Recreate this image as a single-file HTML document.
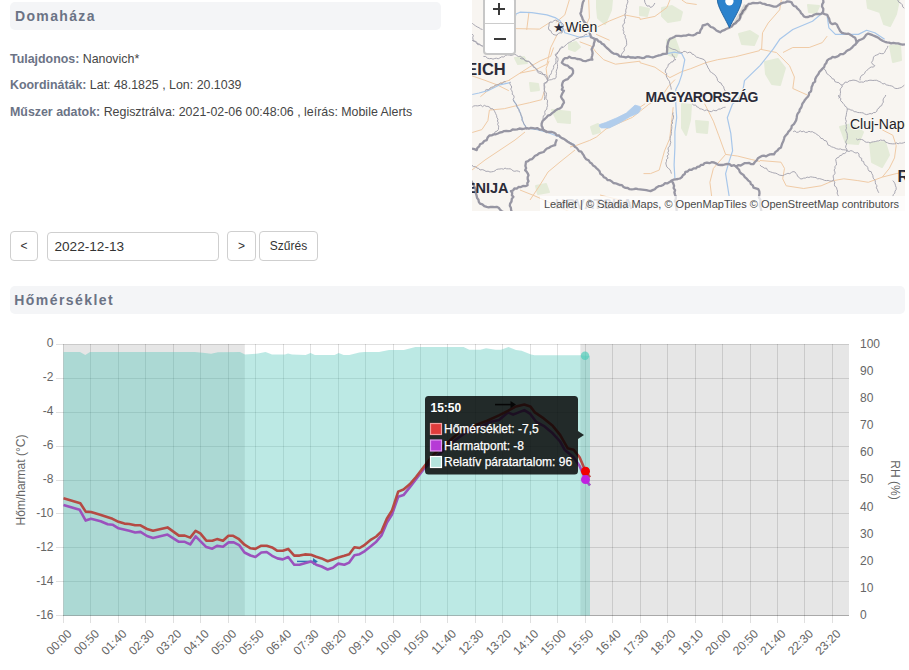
<!DOCTYPE html>
<html><head><meta charset="utf-8">
<style>
html,body{margin:0;padding:0;background:#fff;}
body{width:909px;height:670px;overflow:hidden;position:relative;font-family:"Liberation Sans",sans-serif;}
.a{position:absolute;}
.hdr{position:absolute;background:#f4f5f7;border-radius:5px;}
.hdr span{position:absolute;left:4.2px;font-size:14px;font-weight:bold;color:#6b7385;letter-spacing:1.5px;}
.info{position:absolute;left:10px;font-size:12.4px;color:#454545;white-space:nowrap;}
.info b{color:#6b7385;}
.btn{position:absolute;box-sizing:border-box;border:1px solid #cfcfcf;border-radius:4px;background:#fff;color:#333;font-size:12px;text-align:center;}
.map-ctl{position:absolute;left:482.5px;top:-3px;width:33.2px;height:57.6px;box-sizing:border-box;border:2px solid rgba(0,0,0,0.22);border-radius:4px;background:#fff;}
.attr{position:absolute;left:540px;top:196px;width:365px;height:15px;background:rgba(255,255,255,0.72);font-size:11px;color:#4a4a4a;white-space:nowrap;}
</style></head><body>
<div class="hdr" style="left:10px;top:2px;width:431px;height:28px;"><span style="top:6.3px;left:5px;letter-spacing:1.35px">Domaháza</span></div>
<div class="info" style="top:51.6px;"><b>Tulajdonos:</b> Nanovich*</div>
<div class="info" style="top:78.3px;"><b>Koordináták:</b> Lat: 48.1825 , Lon: 20.1039</div>
<div class="info" style="top:105px;"><b>Műszer adatok:</b> Regisztrálva: 2021-02-06 00:48:06 , leírás: Mobile Alerts</div>
<svg style="position:absolute;left:472px;top:0" width="433" height="211" viewBox="472 0 433 211">
<rect x="472" y="0" width="433" height="211" fill="#f8f5f1"/>
<polygon points="597.0,0.0 612.0,0.0 611.0,10.0 605.0,24.0 598.0,18.0 597.0,8.0" fill="#e4ebd8" stroke="#e4ebd8" stroke-width="2" stroke-linejoin="round"/>
<polygon points="569.0,44.0 576.0,42.0 580.0,47.0 575.0,51.0 569.0,49.0" fill="#e4ebd8" stroke="#e4ebd8" stroke-width="2" stroke-linejoin="round"/>
<polygon points="662.0,8.0 672.0,6.0 682.0,12.0 680.0,20.0 668.0,22.0 662.0,16.0" fill="#e4ebd8" stroke="#e4ebd8" stroke-width="2" stroke-linejoin="round"/>
<polygon points="640.0,7.0 649.0,9.0 647.0,16.0 640.0,15.0" fill="#e4ebd8" stroke="#e4ebd8" stroke-width="2" stroke-linejoin="round"/>
<polygon points="739.0,34.0 750.0,31.0 758.0,36.0 754.0,45.0 742.0,44.0" fill="#e4ebd8" stroke="#e4ebd8" stroke-width="2" stroke-linejoin="round"/>
<polygon points="667.0,40.0 675.0,39.0 679.0,50.0 676.0,57.0 669.0,55.0" fill="#e4ebd8" stroke="#e4ebd8" stroke-width="2" stroke-linejoin="round"/>
<polygon points="765.0,62.0 778.0,59.0 785.0,68.0 780.0,85.0 772.0,84.0 766.0,74.0" fill="#e4ebd8" stroke="#e4ebd8" stroke-width="2" stroke-linejoin="round"/>
<polygon points="867.0,0.0 899.0,0.0 896.0,14.0 890.0,26.0 884.0,24.0 880.0,12.0 868.0,8.0" fill="#e4ebd8" stroke="#e4ebd8" stroke-width="2" stroke-linejoin="round"/>
<polygon points="890.0,46.0 900.0,45.0 901.0,60.0 893.0,62.0" fill="#e4ebd8" stroke="#e4ebd8" stroke-width="2" stroke-linejoin="round"/>
<polygon points="808.0,5.0 819.0,6.0 816.0,13.0 809.0,12.0" fill="#e4ebd8" stroke="#e4ebd8" stroke-width="2" stroke-linejoin="round"/>
<polygon points="840.0,127.0 852.0,124.0 863.0,132.0 858.0,144.0 846.0,143.0" fill="#e4ebd8" stroke="#e4ebd8" stroke-width="2" stroke-linejoin="round"/>
<polygon points="870.0,143.0 885.0,142.0 889.0,155.0 882.0,167.0 872.0,162.0" fill="#e4ebd8" stroke="#e4ebd8" stroke-width="2" stroke-linejoin="round"/>
<polygon points="682.0,104.0 691.0,105.0 690.0,120.0 686.0,135.0 682.0,128.0" fill="#e4ebd8" stroke="#e4ebd8" stroke-width="2" stroke-linejoin="round"/>
<polygon points="696.0,121.0 708.0,122.0 707.0,133.0 697.0,132.0" fill="#e4ebd8" stroke="#e4ebd8" stroke-width="2" stroke-linejoin="round"/>
<polygon points="515.0,58.0 524.0,57.0 527.0,63.0 518.0,64.0" fill="#e4ebd8" stroke="#e4ebd8" stroke-width="2" stroke-linejoin="round"/>
<polygon points="530.0,83.0 538.0,84.0 539.0,90.0 531.0,91.0" fill="#e4ebd8" stroke="#e4ebd8" stroke-width="2" stroke-linejoin="round"/>
<polygon points="552.0,110.0 570.0,112.0 570.0,123.0 558.0,122.0" fill="#e4ebd8" stroke="#e4ebd8" stroke-width="2" stroke-linejoin="round"/>
<polygon points="536.0,186.0 546.0,184.0 549.0,192.0 538.0,194.0" fill="#e4ebd8" stroke="#e4ebd8" stroke-width="2" stroke-linejoin="round"/>
<polygon points="591.0,127.0 598.0,124.0 600.0,132.0 593.0,134.0" fill="#e4ebd8" stroke="#e4ebd8" stroke-width="2" stroke-linejoin="round"/>
<polyline points="514.8,28.6 539.4,29.1 549.9,22.4" fill="none" stroke="#f0cba6" stroke-width="1" stroke-linejoin="round"/>
<polyline points="529.0,11.9 526.7,29.9" fill="none" stroke="#f0cba6" stroke-width="1" stroke-linejoin="round"/>
<polyline points="569.3,0.0 564.8,14.9 555.8,22.4" fill="none" stroke="#f0cba6" stroke-width="1" stroke-linejoin="round"/>
<polyline points="557.3,34.3 550.6,47.8 546.9,64.2 534.9,70.1 520.0,73.1" fill="none" stroke="#f0cba6" stroke-width="1" stroke-linejoin="round"/>
<polyline points="588.7,0.0 589.4,17.9 584.2,29.9 564.8,29.9" fill="none" stroke="#f0cba6" stroke-width="1" stroke-linejoin="round"/>
<polyline points="597.6,26.9 609.6,20.9 624.5,14.9 640.0,17.9 640.0,19.4 654.9,16.4 666.9,7.5 669.9,0.0" fill="none" stroke="#f0cba6" stroke-width="1" stroke-linejoin="round"/>
<polyline points="579.7,41.8 591.6,46.3 596.1,52.2 603.6,59.7 615.5,64.2 640.0,61.2 640.0,62.7 654.9,67.2 669.9,77.6 681.8,71.6 690.7,68.7 705.7,62.7 717.6,59.7 735.5,56.7 759.4,50.7 760.0,49.2 776.4,52.5 789.5,65.6 794.4,77.0 792.8,88.5 807.5,95.1" fill="none" stroke="#f0cba6" stroke-width="1" stroke-linejoin="round"/>
<polyline points="596.1,34.3 609.6,40.3" fill="none" stroke="#f0cba6" stroke-width="1" stroke-linejoin="round"/>
<polyline points="681.8,0.0 686.3,3.0 696.7,4.5" fill="none" stroke="#f0cba6" stroke-width="1" stroke-linejoin="round"/>
<polyline points="781.3,0.0 779.7,9.8 768.2,23.0 762.5,32.8 761.6,49.2" fill="none" stroke="#f0cba6" stroke-width="1" stroke-linejoin="round"/>
<polyline points="783.0,52.5 792.8,47.5 809.2,47.5 822.3,42.6 827.2,36.1" fill="none" stroke="#f0cba6" stroke-width="1" stroke-linejoin="round"/>
<polyline points="760.0,160.5 781.0,162.2 784.5,168.4 782.7,178.8 786.2,185.8 803.7,188.5 821.1,185.8 833.4,180.6 843.8,178.8 857.8,180.6 868.3,182.3 882.3,177.1 896.2,173.6 905.0,171.9" fill="none" stroke="#f0cba6" stroke-width="1" stroke-linejoin="round"/>
<polyline points="882.3,177.1 889.3,168.4 894.5,157.9 896.2,145.7 892.8,135.2 882.3,129.9" fill="none" stroke="#f0cba6" stroke-width="1" stroke-linejoin="round"/>
<polyline points="704.6,103.7 713.4,121.2 718.6,135.2 725.6,154.4 737.8,156.1 751.8,159.6 760.0,161.4" fill="none" stroke="#f0cba6" stroke-width="1" stroke-linejoin="round"/>
<polyline points="725.6,154.4 713.4,168.4 709.9,182.3 711.6,196.0" fill="none" stroke="#f0cba6" stroke-width="1" stroke-linejoin="round"/>
<polyline points="673.2,107.2 669.7,138.7 664.5,150.9 659.2,170.1 650.5,173.6 643.5,173.6" fill="none" stroke="#f0cba6" stroke-width="1" stroke-linejoin="round"/>
<polyline points="640.0,107.2 645.2,103.7" fill="none" stroke="#f0cba6" stroke-width="1" stroke-linejoin="round"/>
<polyline points="471.8,75.8 484.9,80.3 496.9,84.8 508.8,90.7" fill="none" stroke="#f0cba6" stroke-width="1" stroke-linejoin="round"/>
<polyline points="508.8,80.3 529.7,66.9 540.1,60.9 550.6,56.4 553.6,47.5" fill="none" stroke="#f0cba6" stroke-width="1" stroke-linejoin="round"/>
<polyline points="480.4,96.7 489.4,89.3 499.9,83.3 510.0,80.0" fill="none" stroke="#f0cba6" stroke-width="1" stroke-linejoin="round"/>
<polyline points="547.6,80.3 546.1,68.4 549.1,60.9" fill="none" stroke="#f0cba6" stroke-width="1" stroke-linejoin="round"/>
<polyline points="489.4,110.1 487.9,120.6 481.9,129.6 472.2,132.5" fill="none" stroke="#f0cba6" stroke-width="1" stroke-linejoin="round"/>
<polyline points="489.4,110.1 504.3,108.7 516.3,105.7 529.7,102.7 541.6,99.7 544.6,90.7" fill="none" stroke="#f0cba6" stroke-width="1" stroke-linejoin="round"/>
<polyline points="570.0,147.0 576.6,145.3 589.7,140.4 596.3,137.1 606.1,128.9 620.9,122.3 632.4,117.4 640.6,110.8 648.8,104.3 662.0,96.0 668.5,86.2 675.0,79.6" fill="none" stroke="#f0cba6" stroke-width="1" stroke-linejoin="round"/>
<polyline points="472.0,170.0 485.0,160.0 500.0,150.0 515.0,140.0 525.0,132.0" fill="none" stroke="#f0cba6" stroke-width="1" stroke-linejoin="round"/>
<polyline points="530.0,200.0 540.0,185.0 548.0,172.0 560.0,162.0 575.0,150.0" fill="none" stroke="#f0cba6" stroke-width="1" stroke-linejoin="round"/>
<polyline points="520.0,190.0 535.0,196.0 555.0,205.0 570.0,212.0" fill="none" stroke="#f0cba6" stroke-width="1" stroke-linejoin="round"/>
<polyline points="600.0,195.0 620.0,200.0 640.0,205.0" fill="none" stroke="#f0cba6" stroke-width="1" stroke-linejoin="round"/>
<polyline points="514.8,18.5 516.0,14.0 520.0,12.2 531.9,12.7 546.9,14.9 555.8,17.9 560.3,20.9 564.8,32.8 579.7,37.3 590.1,35.8 597.6,40.3 606.6,47.8 614.0,53.7 621.5,56.7 640.0,57.5 654.9,56.7 666.9,53.7 674.3,52.2 681.8,53.7 684.8,59.7 681.8,74.6 678.8,83.6 675.8,89.6 675.8,103.7 676.7,117.7 674.9,131.7 674.9,147.4 674.1,164.9 674.9,178.8" fill="none" stroke="#a8c7ea" stroke-width="1.2" stroke-linejoin="round"/>
<polyline points="760.0,65.6 744.5,80.6 743.0,89.6" fill="none" stroke="#a8c7ea" stroke-width="1.2" stroke-linejoin="round"/>
<polyline points="822.3,13.1 812.5,21.3 792.8,29.5 779.7,39.3 773.1,49.2 760.0,65.6" fill="none" stroke="#a8c7ea" stroke-width="1.2" stroke-linejoin="round"/>
<polyline points="827.2,16.4 828.9,27.9 835.4,34.4 858.4,34.4 866.6,30.3 874.8,32.8 884.6,39.3" fill="none" stroke="#a8c7ea" stroke-width="1.2" stroke-linejoin="round"/>
<polyline points="732.6,103.7 727.3,117.7 730.8,133.4 732.6,150.9 729.1,161.4 725.6,173.6 729.1,196.0" fill="none" stroke="#a8c7ea" stroke-width="1.2" stroke-linejoin="round"/>
<polyline points="743.0,89.6 738.0,100.0 732.6,103.7" fill="none" stroke="#a8c7ea" stroke-width="1.2" stroke-linejoin="round"/>
<polyline points="472.2,94.5 479.0,93.0 487.9,90.7 499.9,84.8 510.3,82.5" fill="none" stroke="#a8c7ea" stroke-width="1.2" stroke-linejoin="round"/>
<polyline points="513.3,99.7 519.3,110.1 523.7,123.6 526.7,128.1 537.2,129.6 547.6,132.5 559.6,137.0 575.0,145.0" fill="none" stroke="#a8c7ea" stroke-width="1.2" stroke-linejoin="round"/>
<polygon points="599.4,124.6 605.5,122.6 616.9,117.8 626.3,113.1 635,105.1 639.7,106.4 641.1,108.4 638.4,113.1 630.3,116.5 620.2,122.6 609.5,127.9 601.4,127.9 599.4,126.6" fill="#b1cdec" stroke="#b1cdec" stroke-width="0.8" stroke-linejoin="round"/>
<polyline points="627.5,0.0 627.9,1.9 627.2,3.8 626.4,5.6 626.7,7.5 626.0,9.1 625.7,10.8 625.9,12.6 624.9,14.2 625.1,16.0 625.6,17.8 624.5,19.4 624.3,21.2 624.8,23.0 623.0,24.5 622.7,26.3 623.5,28.2 623.0,29.9 623.9,31.7 623.6,33.7 625.2,35.3 625.2,37.3 626.1,39.1 626.5,40.9 626.6,42.9 626.7,44.8 625.6,46.5 624.1,48.1 624.4,50.6 623.0,52.2 621.5,54.2 621.5,56.7" fill="none" stroke="#a4a3af" stroke-width="0.95" stroke-linejoin="round"/>
<polyline points="520.0,58.2 521.8,58.9 523.8,58.9 525.1,60.8 527.0,61.3 529.0,61.2 530.1,62.7 531.0,64.4 532.7,65.4 533.4,67.2 535.2,67.9 536.6,69.1 537.7,70.8 539.4,71.6 541.6,72.1 543.0,74.4 545.4,74.6 546.9,76.3 547.4,78.4 547.6,80.6 546.9,82.6 544.8,83.3 543.9,85.1 544.2,87.0 544.1,88.8 544.5,90.7 544.0,92.6 544.5,94.4 544.9,96.3 544.6,98.1 544.6,100.0" fill="none" stroke="#a4a3af" stroke-width="0.95" stroke-linejoin="round"/>
<polyline points="547.6,80.6 547.8,78.7 549.3,77.4 549.3,75.5 550.9,74.3 551.5,72.5 551.9,70.7 553.0,69.3 553.7,67.6 553.6,65.6 555.1,64.3 555.8,62.7 556.0,60.8 555.8,59.0 556.5,57.1 555.8,55.2 557.3,54.0 558.0,52.1 559.0,50.5 560.1,48.9 561.8,47.8 563.6,47.1 565.0,45.8 566.4,44.6 567.8,43.3 569.5,42.3 571.2,41.6 572.7,40.3 574.6,39.9 576.0,38.4 578.1,38.4 579.7,37.3 581.7,36.8 583.6,36.1 585.2,34.6 587.2,34.3" fill="none" stroke="#a4a3af" stroke-width="0.95" stroke-linejoin="round"/>
<polyline points="550.0,22.0 552.3,22.2 554.0,20.6 556.0,20.0 557.6,21.3 559.3,22.4 561.5,22.6 563.0,24.0 563.6,25.9 562.4,27.6 563.1,29.5 562.4,31.2 562.0,33.0 560.1,32.8 558.3,33.4 556.9,35.2 555.0,35.0 553.0,34.3 551.7,32.9 550.9,30.8 549.0,30.0 548.4,27.9 549.0,25.9 549.0,23.9 550.0,22.0" fill="none" stroke="#a4a3af" stroke-width="0.95" stroke-linejoin="round"/>
<polyline points="666.9,44.8 667.9,46.6 669.4,47.6 671.1,48.5 672.8,49.3 674.9,49.6 676.7,50.5 678.3,51.8 680.3,52.2 682.1,52.8 683.9,51.3 685.7,51.6 687.5,52.9 689.3,52.2 691.1,52.5 692.1,54.2 693.9,54.5 695.1,55.9 696.4,57.1 698.1,57.5 699.7,58.2 702.0,58.8 704.2,59.7 705.5,61.6 706.0,63.8 707.2,65.7 708.0,67.8 709.3,69.6 710.1,71.6 711.6,72.5 713.1,73.7 714.6,74.6 716.0,76.4 717.1,78.3 717.6,80.6 719.0,82.2 721.1,83.1 722.0,85.2 723.6,86.6 724.1,88.8 725.1,90.8 726.6,92.5" fill="none" stroke="#a4a3af" stroke-width="0.95" stroke-linejoin="round"/>
<polyline points="672.1,53.7 672.4,55.6 674.2,56.6 674.4,58.5 675.8,59.7 673.9,59.9 673.0,61.8 671.1,62.0 670.0,63.6 668.4,64.2 667.9,66.4 666.6,68.3 665.4,70.1 665.3,72.1 666.8,73.7 666.2,75.8 666.9,77.6 668.1,79.5 669.4,81.3 669.9,83.6 670.5,85.6 671.0,87.6 671.3,89.6" fill="none" stroke="#a4a3af" stroke-width="0.95" stroke-linejoin="round"/>
<polyline points="644.5,0.0 644.9,2.4 646.0,4.5 647.1,6.1 649.4,5.8 650.4,7.5 652.5,6.6 653.8,4.9 654.9,3.0" fill="none" stroke="#a4a3af" stroke-width="0.95" stroke-linejoin="round"/>
<polyline points="823.9,68.9 825.4,70.0 826.1,71.8 826.8,73.6 828.4,74.7 829.8,75.9 831.2,77.1 832.1,78.7 834.1,79.2 834.9,81.6 836.8,82.3 838.9,82.7 840.3,84.3 842.0,85.2 843.9,83.9 845.2,82.0 847.3,82.4 849.1,80.9 851.1,80.6 853.0,80.1 855.1,80.3 857.2,81.0 859.2,82.2 861.6,82.0 863.5,82.2 865.3,80.9 867.2,81.0 869.0,80.3 871.0,80.2 872.9,80.5 874.8,80.3 876.7,80.3 878.2,81.1 879.9,81.7 881.4,82.6 882.8,84.0 884.8,83.5 886.2,84.8 887.9,85.2 889.6,85.6 891.3,85.9 892.9,86.5 894.3,87.9 895.9,88.5 897.7,88.5 899.5,88.0 901.3,87.5 902.8,86.4 904.3,85.2" fill="none" stroke="#a4a3af" stroke-width="0.95" stroke-linejoin="round"/>
<polyline points="842.0,85.2 842.2,87.0 840.6,88.4 840.1,90.0 840.6,91.9 840.3,93.5 840.1,95.2 839.8,96.9 838.7,98.4" fill="none" stroke="#a4a3af" stroke-width="0.95" stroke-linejoin="round"/>
<polyline points="887.9,45.9 887.4,47.7 886.3,49.2 885.3,50.8 884.6,52.5 883.2,53.7 881.3,53.6 879.4,53.3 878.0,54.5 876.4,55.1 874.8,55.7 873.5,57.1 873.2,59.0 872.7,60.8 871.5,62.3 872.7,64.4 874.8,65.6 873.5,67.1 871.2,67.0 869.5,67.9 868.2,69.4 866.6,70.5 865.3,71.7 864.6,73.5 863.3,74.6 861.6,75.4 860.6,76.9 860.1,78.5 860.0,80.3" fill="none" stroke="#a4a3af" stroke-width="0.95" stroke-linejoin="round"/>
<polyline points="897.7,0.0 898.8,2.2 901.0,3.3 902.3,4.8 902.7,6.9 904.3,8.2" fill="none" stroke="#a4a3af" stroke-width="0.95" stroke-linejoin="round"/>
<polyline points="838.6,95.0 838.9,97.0 840.8,98.3 840.5,100.6 842.1,102.0 843.1,103.4 844.3,104.7 845.1,106.3 846.7,107.2 847.3,109.0 849.2,109.1 850.8,110.0 852.7,110.3 854.2,111.6 856.1,111.8 857.8,112.5 859.6,112.6 861.4,112.7 863.1,112.9 864.7,114.0 866.4,114.6 868.3,114.2 870.0,113.5 871.9,113.9 873.5,112.6 875.3,112.5 876.8,111.3 877.3,109.3 878.9,108.2 879.8,106.5 881.7,105.6 882.3,103.7 883.4,102.1 883.0,100.0 883.7,98.2 885.0,96.7 885.8,95.0" fill="none" stroke="#a4a3af" stroke-width="0.95" stroke-linejoin="round"/>
<polyline points="847.3,109.0 847.1,110.8 846.6,112.5 846.4,114.2 846.1,116.0 845.5,117.7 845.6,119.4 846.4,121.3 845.6,123.0 846.3,124.7 846.2,126.5 846.5,128.2 845.7,130.1 846.4,131.8 847.1,133.4 847.3,135.2 847.3,137.0 847.3,138.8 846.4,140.4 845.6,142.1 846.7,144.0 845.9,145.7 845.6,147.4 846.7,149.0 847.3,150.9" fill="none" stroke="#a4a3af" stroke-width="0.95" stroke-linejoin="round"/>
<polyline points="793.2,131.7 794.9,130.9 796.7,132.4 798.4,132.1 800.2,130.8 801.9,131.8 803.7,131.2 805.4,132.4 807.2,132.3 808.9,131.3 810.7,131.9 812.4,131.7 813.9,132.7 815.6,133.4 817.0,134.6 818.5,135.5 819.9,136.7 820.9,138.4 822.9,138.7 824.0,140.4 826.3,140.9 827.3,142.7 827.9,144.9 829.9,145.7 831.5,146.8 833.3,147.3 835.0,148.0 836.7,148.8 838.6,149.2 840.5,148.9 842.1,149.7 843.9,149.8 845.7,150.0 847.3,150.9 849.0,151.5 850.9,150.6 852.6,151.2 854.2,152.4 855.9,153.0 857.8,152.6 859.0,154.0 859.0,156.0 859.9,157.5 861.8,158.4 861.5,160.7 863.6,161.5 864.0,163.3 864.8,164.9 866.6,165.9 867.7,167.3 868.1,169.4 869.0,171.1 871.2,171.7 871.8,173.6 872.8,175.2 873.0,177.2 873.7,178.9 875.2,180.3 875.3,182.3 875.6,184.2 877.1,185.6 876.3,187.8 877.3,189.4 877.9,191.1 878.8,192.8" fill="none" stroke="#a4a3af" stroke-width="0.95" stroke-linejoin="round"/>
<polyline points="847.3,150.9 846.1,152.3 844.7,153.5 842.7,153.7 841.6,155.3 839.7,155.7 838.7,157.4 836.9,157.9 835.7,159.5 836.0,161.3 836.4,163.2 836.5,165.0 834.8,166.5 835.1,168.4 834.1,170.0 834.9,171.9 835.1,173.7 833.3,175.3 833.2,177.0 833.7,178.9 833.4,180.6 834.8,182.1 834.4,184.2 834.7,186.1 836.5,187.4 836.9,189.3 837.6,191.0 837.1,193.0 837.7,194.7 838.6,196.3" fill="none" stroke="#a4a3af" stroke-width="0.95" stroke-linejoin="round"/>
<polyline points="856.1,138.7 857.6,139.9 859.7,139.2 861.5,139.5 863.3,140.0 864.7,141.6 866.4,142.3 868.3,142.2 870.2,142.9 871.8,142.1 873.6,141.8 875.3,141.6 877.0,141.0 878.8,140.9 880.5,140.0 882.3,140.4 884.3,140.2 885.6,142.2 887.4,142.7 889.0,143.5 890.9,143.7 892.8,143.9 894.6,143.8 896.2,142.8 898.1,143.8 899.8,143.0 901.6,143.3 903.3,142.9 905.0,142.2" fill="none" stroke="#a4a3af" stroke-width="0.95" stroke-linejoin="round"/>
<polyline points="760.0,164.9 761.2,166.4 762.9,167.0 764.3,168.2 766.5,168.2 767.4,170.1 768.8,171.3 770.5,171.9 772.3,172.5 774.0,173.0 775.9,173.2 777.6,174.1 779.2,175.0 781.0,175.4 782.9,175.6 784.5,174.7 786.2,174.0 787.9,173.3 789.8,173.7 791.3,172.5 793.0,171.6 794.9,171.9 795.9,173.3 797.0,174.7 797.6,176.4 799.2,177.4 800.2,178.8 802.0,178.9 803.7,178.1 805.4,178.1 807.1,177.1 808.9,177.5 810.6,176.8 812.4,177.1 814.2,177.4 816.0,177.6 817.6,178.8 819.5,178.6 821.2,179.1 822.9,179.6 824.6,180.4 826.4,180.6 828.1,180.4 829.9,181.1 831.6,181.0 833.4,180.6" fill="none" stroke="#a4a3af" stroke-width="0.95" stroke-linejoin="round"/>
<polyline points="892.8,180.6 894.1,182.1 895.0,183.8 895.5,185.8 896.2,187.6 896.1,189.6 895.0,191.1 894.8,193.1 893.4,194.5 892.8,196.3" fill="none" stroke="#a4a3af" stroke-width="0.95" stroke-linejoin="round"/>
<polyline points="673.2,112.5 672.7,114.2 673.5,116.0 673.5,117.8 672.8,119.5 672.0,121.2 672.7,123.0 671.5,124.6 671.8,126.4 671.8,128.2 671.5,129.9 671.4,131.6 671.4,133.4 671.1,135.1 670.3,136.8 670.2,138.6 670.2,140.4 670.8,142.3 670.2,144.0 670.0,145.8 668.4,147.3 668.0,149.0 668.7,150.9 667.8,152.6 668.7,154.5 667.0,156.0 668.1,158.0 666.5,159.6 666.5,161.4 665.8,163.0 666.2,164.9 666.8,166.9 668.3,168.3 670.0,169.7 670.8,171.6 671.4,173.6" fill="none" stroke="#a4a3af" stroke-width="0.95" stroke-linejoin="round"/>
<polyline points="692.4,103.7 693.5,105.2 695.7,105.0 696.7,106.8 698.5,107.3 699.6,108.8 701.5,109.0 703.1,109.7 704.6,110.7 706.4,109.9 708.1,110.6 709.9,111.5 711.6,111.6 713.4,110.3 715.1,110.7 717.0,110.6 718.4,109.0 720.4,109.1 722.0,108.2 723.7,107.4 725.6,107.2" fill="none" stroke="#a4a3af" stroke-width="0.95" stroke-linejoin="round"/>
<polyline points="471.8,40.0 473.4,40.9 475.4,41.2 476.4,43.3 478.3,43.6 480.0,44.4 481.4,45.8 483.4,46.0" fill="none" stroke="#a4a3af" stroke-width="0.95" stroke-linejoin="round"/>
<polyline points="483.4,56.4 485.7,56.5 487.3,58.1 489.4,58.7 491.1,58.4 493.0,59.2 494.7,58.5 496.4,58.2 498.2,58.8 499.9,57.9 501.6,56.8 503.8,57.0 505.4,55.5 507.3,54.9 509.2,55.0 511.1,55.4 513.0,54.9 514.8,54.2 516.6,55.3 518.3,56.5 520.7,56.2 522.2,57.9 523.8,58.7 524.9,60.3 526.5,61.0 528.2,61.4 529.7,62.4 531.5,63.6 532.9,65.2 534.2,66.9 535.3,68.3 536.8,69.4 537.2,71.3 538.3,72.9 540.0,73.3 541.6,74.0 543.4,74.4 544.6,75.8 545.9,77.1 546.7,78.7 547.6,80.3 546.2,82.3 543.9,83.3 544.5,85.2 544.8,87.1 544.4,89.1 544.4,91.1 546.3,92.7 546.4,94.7 546.1,96.7 545.8,98.6 547.6,100.2 547.4,102.0 547.2,103.9 547.6,105.7 546.9,107.4 546.8,109.3 545.2,110.6 544.7,112.4 545.2,114.5 543.4,115.8 543.1,117.6 543.0,119.4 542.5,121.2 542.1,123.0 541.6,124.8 541.6,126.6" fill="none" stroke="#a4a3af" stroke-width="0.95" stroke-linejoin="round"/>
<polyline points="547.6,80.3 549.5,79.9 551.4,79.7 553.2,78.8 555.1,78.8 556.2,77.1 556.1,75.3 556.5,73.5 556.2,71.7 556.6,69.9 557.4,68.2 557.5,66.5 557.5,64.7 556.9,62.8 557.8,61.1 558.1,59.4 557.8,57.4 556.2,56.3 555.1,54.9 556.4,53.2 558.3,52.1 559.6,50.4 560.0,48.6 561.3,47.3 562.5,46.0" fill="none" stroke="#a4a3af" stroke-width="0.95" stroke-linejoin="round"/>
<polyline points="472.2,107.2 473.7,106.0 475.4,105.7 477.3,105.9 479.0,105.7 480.8,105.1 482.5,106.7 484.4,105.3 486.1,106.3 487.9,106.4 489.6,107.1 490.6,108.8 492.7,108.7 493.9,110.1 494.9,111.9 495.7,113.7 496.6,115.6 496.9,117.6 498.0,119.2 497.4,121.0 498.3,122.7 497.6,124.5 498.7,126.1 498.5,127.8 498.4,129.6 497.0,131.1 494.9,132.0 494.4,134.5 492.4,135.5" fill="none" stroke="#a4a3af" stroke-width="0.95" stroke-linejoin="round"/>
<polyline points="510.3,81.8 509.8,83.7 510.8,85.4 511.8,87.0 510.7,89.1 511.8,90.7 512.4,92.4 512.2,94.3 513.9,95.6 514.1,97.4 513.1,99.5 513.8,101.1 514.8,102.7 516.5,104.1 516.6,106.2 517.6,108.0 518.8,109.6 519.3,111.6 520.6,113.1 520.9,114.9 521.8,116.5 522.3,118.3 521.8,120.4 523.3,121.8 523.7,123.6 525.0,125.4 525.9,127.5 526.7,129.6" fill="none" stroke="#a4a3af" stroke-width="0.95" stroke-linejoin="round"/>
<polyline points="505.8,81.8 503.8,81.7 502.4,83.5 500.3,83.1 498.8,84.5 496.9,84.8 495.0,85.3 493.6,86.7 491.7,87.2 490.0,88.0 488.7,89.8 486.4,89.5 484.9,90.7" fill="none" stroke="#a4a3af" stroke-width="0.95" stroke-linejoin="round"/>
<polyline points="472.2,23.3 473.8,24.6 475.5,25.8 477.2,26.9 479.0,27.7 480.6,28.9 482.5,29.5" fill="none" stroke="#a4a3af" stroke-width="0.95" stroke-linejoin="round"/>
<polyline points="472.2,34.0 473.4,35.6 472.7,37.6 473.1,39.4 473.6,41.2 475.5,41.5 477.0,42.3 477.6,44.6 479.6,44.7 481.2,45.4 482.5,46.6" fill="none" stroke="#a4a3af" stroke-width="0.95" stroke-linejoin="round"/>
<polyline points="472.0,165.0 473.2,166.7 475.5,166.6 476.8,168.0 478.7,168.4 480.0,170.0 482.2,169.6 484.1,170.2 486.0,171.4 488.1,171.2 490.0,172.0 491.7,171.8 493.4,171.5 495.0,170.8 496.5,169.5 498.2,169.1 499.9,169.0 501.6,168.7 503.5,169.2 505.0,168.0 506.6,168.8 508.4,168.8 510.2,168.8 511.7,169.6 513.1,170.9 514.8,171.3 516.7,170.8 518.4,171.2 520.0,172.0" fill="none" stroke="#a4a3af" stroke-width="0.95" stroke-linejoin="round"/>
<polyline points="584.2,0.0 582.9,2.3 582.3,4.9 581.9,7.5 581.5,9.5 581.3,11.5 580.4,13.4 581.1,15.4 582.1,17.3 582.7,19.4 584.2,21.9 586.4,23.9 587.6,25.6 588.3,27.6 589.1,29.5 590.1,31.3 589.7,33.4 590.6,35.3 590.9,37.3 594.6,38.8" fill="none" stroke="#9796a3" stroke-width="2.3" stroke-linejoin="round"/>
<polyline points="594.6,38.8 596.9,39.3 598.4,41.3 600.6,41.8 601.8,43.6 603.9,44.5 605.1,46.3 606.6,47.8 608.5,49.2 610.1,50.9 611.9,52.6 614.0,53.7 616.1,53.8 618.0,54.5 619.4,56.4 621.5,56.7 623.7,56.8 625.9,57.5 628.2,56.5 630.4,57.5 632.8,57.4 635.2,57.9 637.6,57.1 640.0,57.5 642.2,58.1 644.3,57.9 646.3,56.4 648.5,56.3 650.6,57.0 652.8,57.5 654.9,56.7 656.9,56.0 658.8,55.3 660.9,55.1 662.7,54.0 664.8,53.8 666.9,53.7 667.0,51.5 667.2,49.2 667.0,47.0 667.6,44.8 668.0,42.6 668.7,40.6 669.9,38.8 672.1,38.0 674.2,37.0 676.3,35.8 678.8,35.8 681.2,36.2 683.6,35.6 686.0,35.6 688.3,34.7 690.7,35.1 693.1,35.3 695.3,34.5 697.3,32.8 699.7,32.8 700.5,30.2 702.0,28.0 702.7,25.4 705.0,25.0 707.6,23.8 709.2,25.4 710.8,27.0 713.1,27.6 714.9,29.0 716.4,30.5 718.3,31.4 720.2,32.3 722.0,30.9 724.2,30.2 726.1,29.0 729.4,27.7 731.8,26.5 733.4,24.4 735.7,23.3 737.3,21.3 739.3,19.8 740.3,17.7 740.4,15.1 742.0,13.2 743.0,10.8 745.1,9.0 746.0,6.6 748.6,4.0 750.9,3.6 753.1,2.9 755.5,3.2 757.8,3.1 760.0,2.5 762.1,3.6 764.5,3.9 766.6,4.9 769.1,5.2 771.5,5.8 773.9,6.6 776.4,6.6 778.9,5.0 781.3,3.3 783.3,2.7 785.4,2.4 787.3,1.3 789.5,1.6 791.6,2.3 792.6,4.4 794.0,6.0 796.1,6.6 797.2,8.3 798.7,9.7 800.2,11.2 801.0,13.1 802.6,14.5 803.8,16.4 805.9,17.2 808.1,17.0 810.0,16.1 812.2,16.0 814.1,14.8 816.1,14.0 818.2,14.0 820.4,14.2 822.3,13.1 824.7,14.1 827.2,14.8 828.1,16.8 829.2,18.8 829.6,21.0 830.5,23.0 832.5,24.2 835.0,23.3 837.0,24.6 837.9,26.9 839.1,29.0 840.2,31.1 842.0,32.8 844.1,33.4 846.3,33.8 848.5,33.6 850.7,35.0 852.8,36.4 855.1,37.7 856.0,40.1 856.7,42.6 858.8,40.4 861.6,39.3 863.6,38.3 865.0,36.5 866.2,34.7 868.2,33.6 870.4,34.4 872.6,35.2 874.8,36.1 877.0,37.1 879.0,38.3 880.9,39.8 883.0,41.0 885.0,41.8 887.0,42.4 889.1,42.7 891.1,43.4 893.5,42.8 895.8,43.3 898.1,43.3 900.4,44.1 902.6,44.7 905.0,44.3" fill="none" stroke="#9796a3" stroke-width="2.3" stroke-linejoin="round"/>
<polyline points="822.3,13.1 823.2,11.0 823.3,8.8 822.0,6.5 822.2,4.3 823.5,2.2 823.1,0.0" fill="none" stroke="#9796a3" stroke-width="2.3" stroke-linejoin="round"/>
<polyline points="856.7,42.6 855.4,44.5 853.4,45.9 852.0,47.7 850.2,49.2 848.2,50.1 846.3,51.2 844.8,53.1 842.9,54.2 840.4,54.1 838.7,55.7 836.9,56.7 834.9,57.4 832.6,56.9 830.9,58.4 828.9,59.0 827.1,60.7 826.3,63.0 824.8,64.8 824.1,67.2 822.3,68.9 820.9,70.4 819.4,71.8 818.6,73.8 817.4,75.4 816.1,77.2 815.2,79.2 815.1,81.6 813.1,83.1 812.5,85.2 811.6,87.1 811.4,89.2 811.0,91.3 809.1,92.8 808.9,95.0 807.8,96.8 806.3,98.3 804.9,99.9 803.9,101.8 802.5,103.4 801.9,105.5 801.2,107.6 799.7,109.4 799.4,111.6 797.8,113.4 797.0,115.4 796.7,117.7 796.2,120.1 795.1,122.2 793.9,124.2 791.8,125.8 791.4,128.2 790.1,130.0 788.5,131.6 787.5,133.6 785.9,135.2 784.5,136.9 784.0,139.1 783.3,141.2 782.3,143.2 781.6,145.3 781.0,147.4 778.8,148.7 777.3,150.7 775.3,152.2 774.0,154.4 771.9,154.2 769.9,154.4 767.9,155.2 766.1,156.4 763.9,155.7 761.9,155.9 760.0,157.0 757.9,158.3 756.7,160.4 754.9,162.0 753.5,164.0 751.3,164.2 749.2,163.0 747.0,163.2 744.8,163.1 742.8,164.3 740.7,165.5 738.1,165.2 736.1,166.6 734.1,165.2 731.5,165.9 729.6,164.2 727.3,164.0 725.1,164.4 723.0,165.0 720.8,165.0 718.6,164.9 716.4,163.6 714.1,162.5 711.6,162.2 709.4,163.2 706.9,162.6 704.6,163.1 703.2,164.8 700.9,164.9 699.5,166.5 697.3,166.8 695.9,168.4 693.6,168.4 691.7,169.8 689.3,169.7 687.6,171.5 685.4,171.9 684.8,174.0 682.9,175.3 681.9,177.1 680.0,178.5 677.9,179.0 675.6,179.3 673.4,179.7 671.4,180.6 669.6,182.1 667.6,183.3 664.9,183.2 663.2,185.0 661.0,185.8 658.6,186.2 656.5,187.4 654.8,189.2 652.6,190.1 650.5,191.1 648.4,190.7 646.3,190.2 644.2,189.9 642.1,189.6 640.0,189.3 637.9,189.1 635.8,188.6 633.8,189.2 631.7,189.3 629.6,189.2 627.8,188.0 625.5,187.9 623.5,187.0 622.0,185.1 619.7,185.0 617.7,184.1 615.7,183.3 613.4,183.0 611.7,181.4 609.9,180.2 607.5,180.0 606.0,178.1 603.9,177.3 602.6,175.2 600.3,173.8 599.6,171.3 597.9,169.4 596.3,168.1 594.9,166.4 593.0,165.4 591.8,163.6 590.0,162.5 588.7,160.4 586.2,159.3 584.7,157.4 583.6,155.1 582.4,153.5 581.3,151.7 579.0,151.1 577.8,149.4 576.6,147.9 574.8,146.7 573.6,145.1 571.5,144.0 569.4,142.8 567.4,141.5 565.5,140.0 563.9,138.8 561.9,138.1 560.3,137.0 558.9,135.3 556.6,135.3 555.4,133.5 553.6,132.5 551.4,131.8 549.1,132.0 546.8,131.8 544.6,131.0 542.3,129.6 539.5,129.5 537.2,128.1 535.1,128.6 533.0,128.2 530.9,127.8 528.8,128.7 526.7,128.1 524.4,128.7 522.0,129.0 519.5,128.5 517.2,129.4 514.8,129.6 512.6,129.5 510.6,130.9 508.5,131.1 506.2,131.0 504.0,131.1 502.0,132.2 499.9,132.5 497.9,133.5 495.9,134.3 493.6,134.3 491.6,135.4 489.4,135.5 487.6,137.6 486.7,140.1 484.2,141.0 482.5,143.3 480.0,144.3 479.2,146.4 477.4,147.9 476.7,150.1 474.4,149.1 472.0,148.5" fill="none" stroke="#9796a3" stroke-width="2.3" stroke-linejoin="round"/>
<polyline points="594.6,38.8 594.7,41.1 593.9,43.3 593.7,45.5 592.5,47.4 591.6,49.3 592.3,51.3 592.6,53.4 592.2,55.5 591.6,57.7 592.4,59.7 590.1,59.7 587.8,60.3 585.7,61.2 583.3,60.9 581.2,59.7 579.2,59.1 577.1,59.0 575.2,58.2 573.1,58.2 571.1,57.8 569.3,56.7 567.5,58.1 565.0,58.1 563.3,59.7 561.8,62.7 563.6,64.2 565.6,65.1 567.8,65.7 569.7,67.6 572.2,68.7 573.1,70.8 573.0,73.1 571.5,75.3 569.4,77.0 567.8,79.1 565.4,79.9 563.3,81.3 562.4,83.3 562.0,85.3 562.8,87.6 561.8,89.6 564.0,90.7 562.8,92.6 561.8,94.6 561.0,96.7 562.0,98.7 563.5,100.5 564.0,102.7 562.6,104.7 561.6,107.1 559.6,108.7 557.4,109.2 555.6,110.4 553.9,111.9 552.1,113.1 550.4,114.8 547.9,115.6 546.4,117.5 544.6,119.1 542.6,121.0 541.6,123.6 541.6,125.7 542.6,127.6 543.1,129.6 545.4,130.9 547.6,132.5" fill="none" stroke="#9796a3" stroke-width="2.3" stroke-linejoin="round"/>
<polyline points="556.9,139.3 556.1,141.2 555.4,143.1 555.2,145.1 553.0,145.7 550.9,146.5 549.0,147.8 546.9,148.5 545.2,150.1 543.7,152.0 541.3,152.6 539.0,153.3 537.3,154.9 535.1,155.8 533.5,157.6 531.9,159.2 529.8,159.7 528.1,161.1 526.0,161.8 525.7,163.9 525.4,166.0 526.1,168.2 525.1,170.2 526.6,171.6 527.7,173.3 528.5,175.2 527.7,177.1 527.7,179.2 528.5,181.2 527.3,183.2 527.6,185.2 525.4,186.2 523.0,185.9 520.9,187.1 518.5,186.9 517.0,188.6 514.4,188.5 513.0,190.5 510.9,191.1 512.2,192.9 511.9,195.3 513.4,196.9 511.8,198.9 511.5,201.5 510.1,203.6 509.8,205.8 510.9,207.8 511.1,210.0 511.8,212.0" fill="none" stroke="#9796a3" stroke-width="2.3" stroke-linejoin="round"/>
<polyline points="470.0,177.0 470.6,179.4 471.5,181.7 473.0,183.7 474.0,186.0 474.9,187.9 475.9,189.8 475.4,192.1 476.2,194.1 476.7,196.1 477.1,198.1 478.5,199.8 478.8,201.9 480.0,203.6 482.4,204.4 484.3,206.2 486.7,206.9 488.7,207.3 490.7,206.8 492.7,207.0 494.7,207.2 496.7,206.9 498.7,207.8 500.0,209.5 501.4,211.1 503.4,212.0" fill="none" stroke="#9796a3" stroke-width="2.3" stroke-linejoin="round"/>
<polyline points="736.1,166.6 737.6,168.2 739.1,169.8 739.8,172.0 741.3,173.6 743.5,174.9 744.8,177.1 746.7,178.7 748.3,180.6 750.2,181.9 750.9,184.1 752.8,185.4 753.5,187.6 755.9,188.3 758.3,189.2 759.3,191.2 759.5,193.3 759.2,195.4 758.9,197.6 760.3,199.5 760.4,201.6 760.0,203.7 759.8,205.9 760.6,207.9 761.2,209.9 761.3,212.0" fill="none" stroke="#9796a3" stroke-width="2.3" stroke-linejoin="round"/>
<polyline points="671.4,180.6 673.1,183.0 674.1,185.8 673.6,188.1 675.1,190.1 674.4,192.4 675.0,194.6 675.9,196.7 675.8,198.9 674.8,201.2 676.3,203.3 675.8,205.5 676.3,207.6 676.6,209.8 676.7,212.0" fill="none" stroke="#9796a3" stroke-width="2.3" stroke-linejoin="round"/>
<g font-family="Liberation Sans, sans-serif" fill="#2b2b38">
<text x="645.6" y="101.6" font-size="14" font-weight="bold" letter-spacing="-0.72" stroke="#faf8f4" stroke-width="2.2" paint-order="stroke" stroke-linejoin="round">MAGYARORSZÁG</text>
<text x="505.8" y="75.2" font-size="16.5" font-weight="bold" text-anchor="end">REICH</text>
<text x="508.5" y="193.2" font-size="14.5" font-weight="bold" text-anchor="end">VENIJA</text>
<text x="897.6" y="181.5" font-size="16" font-weight="bold">R</text>
<text x="565.3" y="32.2" font-size="14" fill="#1e1e28" stroke="#faf8f4" stroke-width="2" paint-order="stroke">Wien</text>
<text x="850" y="129.2" font-size="14" fill="#1e1e28" stroke="#faf8f4" stroke-width="2" paint-order="stroke">Cluj-Napoca</text>
<text x="558.5" y="31.6" font-size="13" text-anchor="middle">★</text>
</g>
<text x="555" y="208.5" font-family="Liberation Sans, sans-serif" font-size="14" font-weight="bold" letter-spacing="0.3" fill="#8e8c9a">HRVATSKA</text>
<path d="M731,27 L741,18 Q747,10 749,6 L744,4 Z" fill="rgba(0,0,0,0.12)"/>
<path d="M729.4,27.7 C726,20 719.5,10 717.8,3 C716.8,-2 717,-8 722,-11 L737,-11 C742,-8 742.2,-2 741.2,3 C739.5,10 733,20 729.4,27.7 Z" fill="#2c83cd" stroke="#1c5f9c" stroke-width="0.9"/>
<ellipse cx="729.4" cy="1.2" rx="4.1" ry="4.3" fill="#ffffff"/>
</svg>
<div class="map-ctl"><div style="position:absolute;left:0;top:24.3px;width:29.2px;height:1px;background:#ccc"></div>
<div style="position:absolute;left:8.6px;top:8.9px;width:12px;height:2.3px;background:#3a3a3a"></div>
<div style="position:absolute;left:13.5px;top:4px;width:2.3px;height:12px;background:#3a3a3a"></div>
<div style="position:absolute;left:9.5px;top:38.6px;width:12px;height:2.3px;background:#3a3a3a"></div></div>
<div class="attr"><span style="position:absolute;left:4px;top:1.7px">Leaflet | © Stadia Maps, © OpenMapTiles © OpenStreetMap contributors</span></div>
<div class="btn" style="left:10px;top:231px;width:28px;height:30px;line-height:28px;">&lt;</div>
<div class="btn" style="left:47px;top:232px;width:172px;height:29px;line-height:27px;text-align:left;padding-left:6.5px;font-size:13.6px;color:#333">2022-12-13</div>
<div class="btn" style="left:227px;top:231px;width:29px;height:30px;line-height:28px;">&gt;</div>
<div class="btn" style="left:259px;top:231px;width:59px;height:30px;line-height:28px;">Szűrés</div>
<div class="hdr" style="left:10px;top:286px;width:895px;height:28px;"><span style="top:5.7px;letter-spacing:1.45px">Hőmérséklet</span></div>
<svg style="position:absolute;left:0;top:320px" width="909" height="350" viewBox="0 320 909 350">
<defs><clipPath id="pc"><rect x="63" y="344" width="786" height="272"/></clipPath></defs>
<rect x="63" y="344" width="786" height="272" fill="#e6e6e6"/>
<rect x="244.8" y="344.0" width="335.59999999999997" height="271.5" fill="#ffffff"/>
<g stroke="rgba(0,0,0,0.12)" stroke-width="1"><line x1="56" y1="344.5" x2="849" y2="344.5"/><line x1="56" y1="378.5" x2="849" y2="378.5"/><line x1="56" y1="412.5" x2="849" y2="412.5"/><line x1="56" y1="446.5" x2="849" y2="446.5"/><line x1="56" y1="480.5" x2="849" y2="480.5"/><line x1="56" y1="513.5" x2="849" y2="513.5"/><line x1="56" y1="547.5" x2="849" y2="547.5"/><line x1="56" y1="581.5" x2="849" y2="581.5"/><line x1="56" y1="615.5" x2="849" y2="615.5"/><line x1="63.5" y1="344" x2="63.5" y2="623"/><line x1="90.5" y1="344" x2="90.5" y2="623"/><line x1="118.5" y1="344" x2="118.5" y2="623"/><line x1="145.5" y1="344" x2="145.5" y2="623"/><line x1="173.5" y1="344" x2="173.5" y2="623"/><line x1="200.5" y1="344" x2="200.5" y2="623"/><line x1="228.5" y1="344" x2="228.5" y2="623"/><line x1="255.5" y1="344" x2="255.5" y2="623"/><line x1="283.5" y1="344" x2="283.5" y2="623"/><line x1="310.5" y1="344" x2="310.5" y2="623"/><line x1="338.5" y1="344" x2="338.5" y2="623"/><line x1="365.5" y1="344" x2="365.5" y2="623"/><line x1="393.5" y1="344" x2="393.5" y2="623"/><line x1="420.5" y1="344" x2="420.5" y2="623"/><line x1="447.5" y1="344" x2="447.5" y2="623"/><line x1="475.5" y1="344" x2="475.5" y2="623"/><line x1="502.5" y1="344" x2="502.5" y2="623"/><line x1="530.5" y1="344" x2="530.5" y2="623"/><line x1="557.5" y1="344" x2="557.5" y2="623"/><line x1="585.5" y1="344" x2="585.5" y2="623"/><line x1="612.5" y1="344" x2="612.5" y2="623"/><line x1="640.5" y1="344" x2="640.5" y2="623"/><line x1="667.5" y1="344" x2="667.5" y2="623"/><line x1="695.5" y1="344" x2="695.5" y2="623"/><line x1="722.5" y1="344" x2="722.5" y2="623"/><line x1="750.5" y1="344" x2="750.5" y2="623"/><line x1="777.5" y1="344" x2="777.5" y2="623"/><line x1="804.5" y1="344" x2="804.5" y2="623"/><line x1="832.5" y1="344" x2="832.5" y2="623"/></g>
<line x1="63" y1="615.5" x2="849" y2="615.5" stroke="rgba(0,0,0,0.16)" stroke-width="1"/>
<polygon clip-path="url(#pc)" points="63.5,352.1 80.0,352.1 85.3,355.0 90.0,352.1 195.0,352.1 205.0,353.0 211.0,353.7 218.0,352.3 240.0,352.1 245.0,354.5 258.0,353.6 265.5,352.0 272.0,354.5 285.0,354.5 288.0,353.5 292.0,354.5 305.7,355.0 310.6,352.9 314.8,355.0 334.6,355.0 338.7,352.9 343.6,355.0 349.4,355.0 359.3,352.5 364.3,352.0 379.1,352.0 389.0,350.0 403.9,350.0 415.4,347.1 430.0,347.0 463.6,347.0 469.3,349.8 480.5,349.8 486.0,348.3 495.4,349.8 501.0,349.8 508.5,347.0 516.0,350.1 521.6,350.7 531.0,354.4 534.7,355.2 580.5,355.2 585.5,355.8 590.0,355.8 590.0,615.5 63.5,615.5" fill="rgba(80,198,185,0.38)"/>
<g fill="#3072b5" stroke="#3072b5"><line x1="297" y1="561.4" x2="314" y2="561.4" stroke-width="1.4"/><polygon points="313,557.9 317.8,561.4 313,564.9" stroke="none"/></g>
<polyline clip-path="url(#pc)" points="63.5,505.1 79.7,509.8 85.7,520.6 91.0,518.8 100.6,521.2 107.7,524.2 112.5,524.7 118.5,528.3 129.2,530.7 135.2,532.5 140.5,531.9 147.0,536.0 153.0,537.9 167.5,534.6 178.9,541.8 184.8,541.8 190.2,544.4 195.6,536.4 206.3,547.1 212.3,548.7 217.0,545.9 223.0,546.8 228.4,542.4 233.8,542.4 239.1,545.1 244.5,552.5 250.5,555.5 255.4,557.0 261.3,552.5 266.7,552.0 272.1,555.8 277.4,558.4 282.8,559.4 288.2,557.0 294.2,564.7 299.5,564.7 310.9,561.5 316.2,564.7 321.6,566.5 327.6,569.5 332.9,567.7 338.3,563.6 344.3,564.7 349.2,562.6 354.4,555.3 359.6,554.2 364.8,551.1 371.1,545.9 376.3,541.7 381.5,535.4 386.8,522.9 392.0,514.5 398.2,496.8 403.5,495.1 409.7,487.4 416.0,479.1 423.3,469.7 435.0,458.0 450.0,444.0 465.0,433.0 483.5,425.5 490.0,422.0 499.0,419.9 507.9,412.4 513.1,414.6 524.3,410.1 530.3,413.9 536.3,422.0 543.7,425.8 552.7,433.3 560.1,441.5 564.6,449.7 573.6,457.2 579.6,466.1 585.5,479.6 590.0,485.5" fill="none" stroke="#9b52bd" stroke-width="2.6" stroke-linejoin="round"/>
<polyline clip-path="url(#pc)" points="63.5,498.3 80.3,503.3 85.7,511.6 91.0,512.0 99.4,514.6 112.5,518.8 118.5,521.8 124.4,523.6 129.2,524.0 135.2,525.3 140.5,525.3 147.0,529.0 153.0,530.7 167.5,527.4 178.9,535.6 184.8,535.6 190.2,537.6 195.6,530.8 200.3,533.4 206.3,540.6 212.3,540.8 217.0,539.1 223.0,540.8 228.4,535.8 233.2,535.8 238.5,538.8 244.5,544.7 250.5,548.3 255.4,548.9 261.3,545.7 266.7,545.7 272.1,547.4 277.4,550.8 282.8,550.8 288.2,548.9 294.2,555.6 299.5,555.6 304.9,554.4 310.9,554.8 316.2,556.8 321.6,558.4 327.6,561.2 332.9,559.4 338.3,557.6 344.3,555.8 349.2,554.2 354.4,547.3 359.6,548.0 364.8,544.8 371.1,539.6 376.3,536.5 381.5,531.3 386.8,518.7 392.0,510.4 398.2,491.6 403.5,489.5 409.7,484.3 416.0,477.0 423.3,467.6 433.4,454.8 442.4,447.0 459.1,432.4 473.7,425.7 487.1,420.7 499.0,415.4 507.9,410.9 516.1,406.4 524.3,404.6 530.3,406.4 534.8,412.4 543.7,418.4 552.7,425.8 560.1,434.8 567.6,448.2 573.6,449.7 579.6,457.2 585.5,471.3 590.0,477.3" fill="none" stroke="#b54a44" stroke-width="2.6" stroke-linejoin="round"/>
<g fill="#222" stroke="#222"><line x1="495" y1="404.6" x2="512" y2="404.6" stroke-width="1.6"/><polygon points="510.5,400.9 516,404.6 510.5,408.3" stroke="none"/></g>
<circle cx="585" cy="355.8" r="4.2" fill="rgba(70,205,185,0.65)"/>
<circle cx="585.5" cy="471.3" r="4.5" fill="#f00000"/>
<circle cx="585.5" cy="479.6" r="4.5" fill="#c020e0"/>
<g font-family="Liberation Sans, sans-serif" font-size="12" fill="#666666"><text x="53.5" y="347.0" text-anchor="end">0</text><text x="53.5" y="380.9" text-anchor="end">-2</text><text x="53.5" y="414.9" text-anchor="end">-4</text><text x="53.5" y="448.8" text-anchor="end">-6</text><text x="53.5" y="482.8" text-anchor="end">-8</text><text x="53.5" y="516.7" text-anchor="end">-10</text><text x="53.5" y="550.6" text-anchor="end">-12</text><text x="53.5" y="584.6" text-anchor="end">-14</text><text x="53.5" y="618.5" text-anchor="end">-16</text><text x="860" y="347.7">100</text><text x="860" y="374.8">90</text><text x="860" y="402.0">80</text><text x="860" y="429.1">70</text><text x="860" y="456.3">60</text><text x="860" y="483.4">50</text><text x="860" y="510.6">40</text><text x="860" y="537.8">30</text><text x="860" y="564.9">20</text><text x="860" y="592.1">10</text><text x="860" y="619.2">0</text><text x="72.5" y="634.6" text-anchor="end" transform="rotate(-45 72.5 634.6)">00:00</text><text x="100.0" y="634.6" text-anchor="end" transform="rotate(-45 100.0 634.6)">00:50</text><text x="127.4" y="634.6" text-anchor="end" transform="rotate(-45 127.4 634.6)">01:40</text><text x="154.9" y="634.6" text-anchor="end" transform="rotate(-45 154.9 634.6)">02:30</text><text x="182.3" y="634.6" text-anchor="end" transform="rotate(-45 182.3 634.6)">03:20</text><text x="209.8" y="634.6" text-anchor="end" transform="rotate(-45 209.8 634.6)">04:10</text><text x="237.3" y="634.6" text-anchor="end" transform="rotate(-45 237.3 634.6)">05:00</text><text x="264.7" y="634.6" text-anchor="end" transform="rotate(-45 264.7 634.6)">05:50</text><text x="292.2" y="634.6" text-anchor="end" transform="rotate(-45 292.2 634.6)">06:40</text><text x="319.6" y="634.6" text-anchor="end" transform="rotate(-45 319.6 634.6)">07:30</text><text x="347.1" y="634.6" text-anchor="end" transform="rotate(-45 347.1 634.6)">08:20</text><text x="374.6" y="634.6" text-anchor="end" transform="rotate(-45 374.6 634.6)">09:10</text><text x="402.0" y="634.6" text-anchor="end" transform="rotate(-45 402.0 634.6)">10:00</text><text x="429.5" y="634.6" text-anchor="end" transform="rotate(-45 429.5 634.6)">10:50</text><text x="456.9" y="634.6" text-anchor="end" transform="rotate(-45 456.9 634.6)">11:40</text><text x="484.4" y="634.6" text-anchor="end" transform="rotate(-45 484.4 634.6)">12:30</text><text x="511.9" y="634.6" text-anchor="end" transform="rotate(-45 511.9 634.6)">13:20</text><text x="539.3" y="634.6" text-anchor="end" transform="rotate(-45 539.3 634.6)">14:10</text><text x="566.8" y="634.6" text-anchor="end" transform="rotate(-45 566.8 634.6)">15:00</text><text x="594.2" y="634.6" text-anchor="end" transform="rotate(-45 594.2 634.6)">15:50</text><text x="621.7" y="634.6" text-anchor="end" transform="rotate(-45 621.7 634.6)">16:40</text><text x="649.2" y="634.6" text-anchor="end" transform="rotate(-45 649.2 634.6)">17:30</text><text x="676.6" y="634.6" text-anchor="end" transform="rotate(-45 676.6 634.6)">18:20</text><text x="704.1" y="634.6" text-anchor="end" transform="rotate(-45 704.1 634.6)">19:10</text><text x="731.5" y="634.6" text-anchor="end" transform="rotate(-45 731.5 634.6)">20:00</text><text x="759.0" y="634.6" text-anchor="end" transform="rotate(-45 759.0 634.6)">20:50</text><text x="786.5" y="634.6" text-anchor="end" transform="rotate(-45 786.5 634.6)">21:40</text><text x="813.9" y="634.6" text-anchor="end" transform="rotate(-45 813.9 634.6)">22:30</text><text x="841.4" y="634.6" text-anchor="end" transform="rotate(-45 841.4 634.6)">23:20</text><text x="0" y="0" text-anchor="middle" transform="translate(24.5 480) rotate(-90)">Hőm/harmat (°C)</text><text x="0" y="0" text-anchor="middle" transform="translate(891 480) rotate(90)">RH (%)</text></g>
<path d="M428,396 H574.5 Q578,396 578,399.5 V431 L584,435 L578,439 V471 Q578,474.5 574.5,474.5 H428.5 Q425,474.5 425,471 V399.5 Q425,396 428.5,396 Z" fill="rgba(0,0,0,0.82)"/><text x="430.5" y="412" font-family="Liberation Sans, sans-serif" font-size="12" font-weight="bold" fill="#ffffff">15:50</text><rect x="430.5" y="423.5" width="11" height="11" fill="#e03c3c" stroke="#f4a0a0" stroke-width="1.2"/><text x="444" y="433.0" font-family="Liberation Sans, sans-serif" font-size="12" fill="#ffffff" stroke="#ffffff" stroke-width="0.25">Hőmérséklet: -7,5</text><rect x="430.5" y="440.0" width="11" height="11" fill="#b63ad6" stroke="#e09cf0" stroke-width="1.2"/><text x="444" y="449.5" font-family="Liberation Sans, sans-serif" font-size="12" fill="#ffffff" stroke="#ffffff" stroke-width="0.25">Harmatpont: -8</text><rect x="430.5" y="456.5" width="11" height="11" fill="#b5e5de" stroke="#ffffff" stroke-width="1.2"/><text x="444" y="466.0" font-family="Liberation Sans, sans-serif" font-size="12" fill="#ffffff" stroke="#ffffff" stroke-width="0.25">Relatív páratartalom: 96</text>
</svg>
</body></html>
